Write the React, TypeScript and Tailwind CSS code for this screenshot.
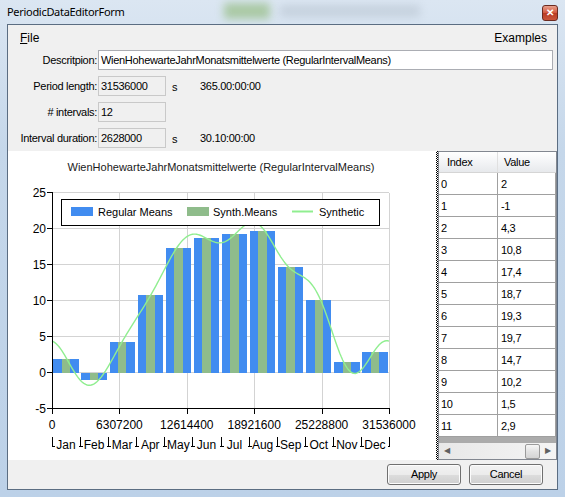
import React from 'react'

const VALUES = [2, -1, 4.3, 10.8, 17.4, 18.7, 19.3, 19.7, 14.7, 10.2, 1.5, 2.9]
const MONTHS = ['Jan', 'Feb', 'Mar', 'Apr', 'May', 'Jun', 'Jul', 'Aug', 'Sep', 'Oct', 'Nov', 'Dec']
const X_TICKS = ['0', '6307200', '12614400', '18921600', '25228800', '31536000']
const Y_TICKS = [25, 20, 15, 10, 5, 0, -5]

// plot area, page coordinates
const PX0 = 52
const PX1 = 389
const vy = (v: number) => 372 - 7.2 * v
const tx = (f: number) => PX0 + (PX1 - PX0) * f
const SLOT = (PX1 - PX0) / VALUES.length

// trigonometric curve whose interval means are the values
function synthPath() {
  const n = VALUES.length
  const a0 = VALUES.reduce((s, v) => s + v, 0) / n
  const terms: { k: number; a: number; b: number }[] = []
  for (let k = 1; k <= n / 2; k++) {
    const sinc = Math.sin((Math.PI * k) / n) / ((Math.PI * k) / n)
    const w = k === n / 2 ? 1 / n : 2 / n
    let a = 0
    let b = 0
    VALUES.forEach((v, i) => {
      const c = (i + 0.5) / n
      a += v * Math.cos(2 * Math.PI * k * c)
      b += v * Math.sin(2 * Math.PI * k * c)
    })
    terms.push({ k, a: (a * w) / sinc, b: (b * w) / sinc })
  }
  const f = (t: number) =>
    terms.reduce((s, { k, a, b }) => s + a * Math.cos(2 * Math.PI * k * t) + b * Math.sin(2 * Math.PI * k * t), a0)
  const pts: string[] = []
  for (let i = 0; i <= 240; i++) {
    const t = i / 240
    pts.push(`${tx(t).toFixed(2)},${vy(f(t)).toFixed(2)}`)
  }
  return 'M' + pts.join('L')
}

function Chart() {
  const path = synthPath()
  return (
    <svg width={428} height={309} viewBox="8 150 428 309" className="block">
      <text x={221} y={170} textAnchor="middle" fontSize={11} fill="#1a1a1a">
        WienHohewarteJahrMonatsmittelwerte (RegularIntervalMeans)
      </text>

      {/* grid */}
      <g stroke="#d3d3d3" strokeWidth={1} shapeRendering="crispEdges">
        {[25, 20, 15, 10, 5, 0].map((v) => (
          <line key={v} x1={PX0} x2={PX1} y1={vy(v) - 0.5} y2={vy(v) - 0.5} />
        ))}
        {[1, 2, 3, 4, 5].map((k) => (
          <line key={k} x1={tx(k / 5) + 0.5} x2={tx(k / 5) + 0.5} y1={vy(25)} y2={vy(-5)} />
        ))}
      </g>

      {/* bars */}
      <g shapeRendering="crispEdges">
        {VALUES.map((v, i) => {
          const cx = PX0 + SLOT * (i + 0.5)
          const bw = SLOT * 0.9
          const top = Math.min(vy(v), vy(0))
          const h = Math.abs(vy(v) - vy(0))
          return (
            <g key={i}>
              <rect x={cx - bw / 2} y={top} width={bw} height={h} fill="#418cf0" />
              <rect x={cx - bw / 6} y={top} width={bw / 3} height={h} fill="#8fbc8b" />
            </g>
          )
        })}
      </g>

      <path d={path} fill="none" stroke="#90ee90" strokeWidth={1.4} />

      {/* axes */}
      <g stroke="#000" strokeWidth={1} shapeRendering="crispEdges">
        <line x1={PX0 + 0.5} x2={PX0 + 0.5} y1={vy(25) - 1} y2={vy(-5)} />
        <line x1={PX0} x2={PX1 + 1} y1={vy(-5) - 0.5} y2={vy(-5) - 0.5} />
        {Y_TICKS.map((v) => (
          <line key={v} x1={PX0 - 5} x2={PX0} y1={vy(v) - 0.5} y2={vy(v) - 0.5} />
        ))}
        {[0, 1, 2, 3, 4, 5].map((k) => (
          <line key={k} x1={tx(k / 5) + 0.5} x2={tx(k / 5) + 0.5} y1={vy(-5)} y2={vy(-5) + 5} />
        ))}
      </g>

      <g fontSize={12} fill="#000">
        {Y_TICKS.map((v) => (
          <text key={v} x={46} y={vy(v) + 3.5} textAnchor="end">
            {v}
          </text>
        ))}
        {X_TICKS.map((l, k) => (
          <text key={l} x={tx(k / 5)} y={428} textAnchor="middle">
            {l}
          </text>
        ))}
        {MONTHS.map((m, i) => (
          <text key={m} x={PX0 + SLOT * (i + 0.5)} y={448} textAnchor="middle">
            {m}
          </text>
        ))}
      </g>

      {/* month label marks */}
      <g stroke="#000" strokeWidth={1} shapeRendering="crispEdges">
        {Array.from({ length: 13 }, (_, k) => {
          const x = Math.round(PX0 + SLOT * k) + 0.5
          return (
            <g key={k}>
              <line x1={x} x2={x} y1={436} y2={446} />
              {k < 12 && <line x1={x} x2={x + 2} y1={445.5} y2={445.5} />}
              {k > 0 && <line x1={x - 2} x2={x} y1={445.5} y2={445.5} />}
            </g>
          )
        })}
      </g>

      {/* legend */}
      <rect x={61.5} y={198.5} width={318} height={26} fill="#fff" stroke="#000" />
      <rect x={71} y={206} width={22} height={9} fill="#418cf0" />
      <rect x={187} y={206} width={22} height={9} fill="#8fbc8b" />
      <line x1={292} x2={313} y1={210.5} y2={210.5} stroke="#90ee90" strokeWidth={2} />
      <g fontSize={11} fill="#000">
        <text x={98} y={215}>Regular Means</text>
        <text x={213} y={215}>Synth.Means</text>
        <text x={319} y={215}>Synthetic</text>
      </g>
    </svg>
  )
}

function ReadBox({ value }: { value: string }) {
  return (
    <div className="flex h-[20px] w-[68px] items-center border border-[#c9c9c9] bg-[#f0f0f0] px-[2px] text-black">
      {value}
    </div>
  )
}

function Row({ label, value, unit, extra }: { label: string; value: string; unit?: string; extra?: string }) {
  return (
    <div className="flex h-[20px] items-center">
      <div className="w-[90px] whitespace-nowrap pr-[1px] text-right">{label}</div>
      <ReadBox value={value} />
      {unit && <div className="ml-[6px] w-[28px] pt-[3px]">{unit}</div>}
      {extra && <div className="pt-[1px]">{extra}</div>}
    </div>
  )
}

function Grid() {
  return (
    <div className="flex h-full w-[120px] flex-col border border-[#828790] bg-[#ababab] leading-[14px] tracking-[-0.3px]">
      <div className="flex h-[21px] border-b border-[#d5d5d5] bg-[linear-gradient(#ffffff,#f3f4f6_50%,#e7e9ec)]">
        <div className="w-[59px] border-r border-[#e0e0e0] pl-[8px] pt-[3px]">Index</div>
        <div className="flex-1 pl-[6px] pt-[3px]">Value</div>
      </div>
      {VALUES.map((v, i) => (
        <div key={i} className="flex h-[22px] bg-white">
          <div className="w-[59px] border-b border-r border-[#a0a0a0] pl-[2px] pt-[4px]">{i}</div>
          <div className="w-[58px] border-b border-r border-[#a0a0a0] pl-[3px] pt-[4px]">
            {String(v).replace('.', ',')}
          </div>
        </div>
      ))}
      <div className="flex-1" />
      <div className="flex h-[16px] items-center bg-[linear-gradient(90deg,#e8e8e8,#f4f4f4)]">
        <div className="flex w-[16px] justify-center text-[8px] text-[#606060]">◀</div>
        <div className="flex-1" />
        <div className="h-[15px] w-[15px] rounded-[2px] border border-[#9a9a9a] bg-[linear-gradient(#f6f6f6,#e2e2e2_50%,#d4d4d4)]" />
        <div className="flex w-[16px] justify-center text-[8px] text-[#606060]">▶</div>
      </div>
    </div>
  )
}

function Button({ children }: { children: React.ReactNode }) {
  return (
    <div className="flex h-[21px] w-[74px] items-center justify-center rounded-[3px] border border-[#707070] bg-[linear-gradient(#f2f2f2,#ebebeb_50%,#dddddd_50%,#cfcfcf)] shadow-[inset_0_0_0_1px_#fcfcfc]">
      {children}
    </div>
  )
}

export default function App() {
  return (
    <div className="relative flex h-[497px] w-[565px] flex-col overflow-hidden bg-[linear-gradient(180deg,#dbe6f2,#c5d7ea_30%,#bcd1e8)] font-['Liberation_Sans',Arial,sans-serif] text-[11px] tracking-[-0.3px] text-black">
      {/* blurred desktop behind the glass */}
      <div className="absolute left-[224px] top-[3px] h-[16px] w-[46px] bg-[#7cae5a] opacity-50 blur-[4px]" />
      <div className="absolute left-[280px] top-[5px] h-[12px] w-[140px] bg-[#9aa6b2] opacity-30 blur-[4px]" />

      <div className="relative flex h-[24px] items-center pl-[7px]">
        <div className="font-['Noto_Sans',sans-serif] text-[11px] text-black">PeriodicDataEditorForm</div>
        <div className="absolute right-[7px] top-[5px] flex h-[16px] w-[16px] items-center justify-center rounded-[3px] border border-[#6b2a20] bg-[linear-gradient(#e8a08c,#d2553c_50%,#b83a22_50%,#c9543a)] text-[10px] font-bold leading-none text-white">
          ✕
        </div>
      </div>

      <div className="relative mx-[7px] flex h-[466px] flex-col border border-[#5b6d82] bg-[#f0f0f0]">
        <div className="flex h-[22px] items-center justify-between pl-[12px] pr-[10px] pt-[4px] text-[12px] tracking-normal">
          <div>
            <span className="underline">F</span>ile
          </div>
          <div>Examples</div>
        </div>

        <div className="mt-[3px] flex h-[20px] items-center">
          <div className="w-[90px] pr-[1px] text-right">Descritpion:</div>
          <div className="flex h-[20px] w-[455px] items-center border border-[#abadb3] bg-white px-[2px]">
            WienHohewarteJahrMonatsmittelwerte (RegularIntervalMeans)
          </div>
        </div>

        <div className="mt-[6px]">
          <Row label="Period length:" value="31536000" unit="s" extra="365.00:00:00" />
        </div>
        <div className="mt-[6px]">
          <Row label="# intervals:" value="12" />
        </div>
        <div className="mt-[6px]">
          <Row label="Interval duration:" value="2628000" unit="s" extra="30.10:00:00" />
        </div>

        <div className="mt-[3px] flex h-[309px] tracking-normal">
          <div className="w-[428px] bg-white">
            <Chart />
          </div>
          <div className="w-[2px] bg-[conic-gradient(#000_25%,#fff_0_50%,#000_0_75%,#fff_0)] bg-[length:2px_2px]" />
          <Grid />
        </div>

        <div className="flex flex-1 items-center justify-end gap-[8px] pr-[14px]">
          <Button>Apply</Button>
          <Button>Cancel</Button>
        </div>
      </div>
    </div>
  )
}
